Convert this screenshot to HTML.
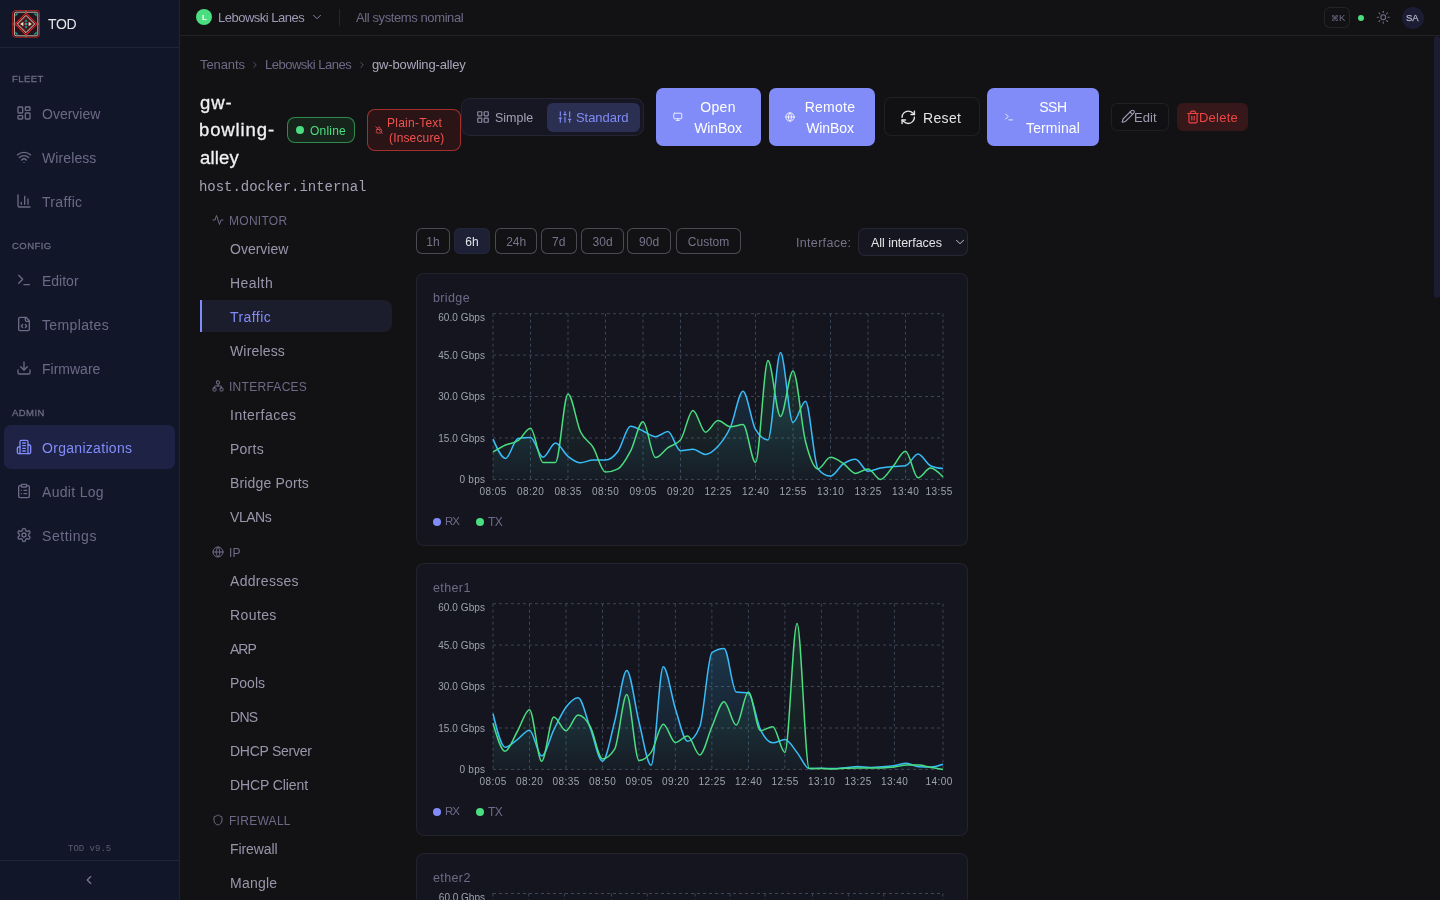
<!DOCTYPE html>
<html><head><meta charset="utf-8"><title>TOD</title>
<style>
*{margin:0;padding:0;box-sizing:border-box}
html,body{width:1440px;height:900px;overflow:hidden;background:#121214;font-family:"Liberation Sans", sans-serif;}
.b{position:absolute}
.ic{position:absolute;overflow:visible}
.t{position:absolute;white-space:nowrap;line-height:1;font-family:"Liberation Sans", sans-serif;will-change:transform}
.m{font-family:"Liberation Mono", monospace}
svg text{font-family:"Liberation Sans", sans-serif}
</style></head><body>
<div class="b" style="left:0px;top:0px;width:180px;height:900px;background:#111729;border-radius:0px;"></div>
<div class="b" style="left:179px;top:0px;width:1px;height:900px;background:#1e2433;border-radius:0px;"></div>
<div class="b" style="left:0px;top:47px;width:179px;height:1px;background:#1f2535;border-radius:0px;"></div>
<svg class="ic" style="left:12px;top:10px" width="28" height="28" viewBox="0 0 28 28">
<rect x="0.6" y="0.5" width="26.8" height="26.8" rx="3.2" fill="#24141d" stroke="#a11d1d" stroke-width="1.1"/>
<rect x="2.4" y="2.2" width="23.4" height="23.6" rx="1.6" fill="none" stroke="#cfc6b4" stroke-width="0.9"/>
<path d="M3.4 3.4h3.2L3.4 6.6zM24.6 3.4v3.2L21.4 3.4zM3.4 24.6v-3.2l3.2 3.2zM24.6 24.6h-3.2l3.2-3.2z" fill="#14a89a"/>
<path d="M14 0.6v2.6M14 24.8v2.6M0.6 14h2.6M24.8 14h2.6" stroke="#8a8276" stroke-width="0.9"/>
<path d="M14 3.2L24.8 14 14 24.8 3.2 14Z" fill="#2a121a" stroke="#d42525" stroke-width="1.2"/>
<path d="M14 5.4L22.6 14 14 22.6 5.4 14Z" fill="none" stroke="#e9dcc4" stroke-width="1"/>
<path d="M14 7.6L20.4 14 14 20.4 7.6 14Z" fill="none" stroke="#a31d1d" stroke-width="0.8"/>
<path d="M8.2 14l3.2-2.3v4.6zM19.8 14l-3.2-2.3v4.6z" fill="#f3e3c3"/>
<path d="M14 9.2l1.7 2.6h-3.4zM14 18.8l1.7-2.6h-3.4z" fill="#14a89a"/>
<path d="M12 14h4M14 12v4" stroke="#c42222" stroke-width="1.2"/>
<rect x="12.9" y="12.9" width="2.2" height="2.2" fill="#14a89a"/>
</svg>
<div class="t" style="left:48.00px;top:17.15px;font-size:14px;color:#e5e7eb;letter-spacing:-0.4px;">TOD</div>
<div class="t" style="left:12.00px;top:74.46px;font-size:9.5px;color:#6b6b80;letter-spacing:0.45px;-webkit-text-stroke:0.3px #6b6b80;">FLEET</div>
<svg class="ic" style="left:15.9px;top:105.2px" width="16" height="16" viewBox="0 0 24 24" fill="none" stroke="#6d6a87" stroke-width="2" stroke-linecap="round" stroke-linejoin="round" ><rect width="7" height="9" x="3" y="3" rx="1"/><rect width="7" height="5" x="14" y="3" rx="1"/><rect width="7" height="9" x="14" y="12" rx="1"/><rect width="7" height="5" x="3" y="16" rx="1"/></svg>
<div class="t" style="left:42.00px;top:107.15px;font-size:14px;color:#6d6a87;">Overview</div>
<svg class="ic" style="left:15.9px;top:149.2px" width="16" height="16" viewBox="0 0 24 24" fill="none" stroke="#6d6a87" stroke-width="2" stroke-linecap="round" stroke-linejoin="round" ><path d="M12 20h.01"/><path d="M2 8.82a15 15 0 0 1 20 0"/><path d="M5 12.859a10 10 0 0 1 14 0"/><path d="M8.5 16.429a5 5 0 0 1 7 0"/></svg>
<div class="t" style="left:42.00px;top:151.15px;font-size:14px;color:#6d6a87;letter-spacing:0.1px;">Wireless</div>
<svg class="ic" style="left:15.9px;top:193.39999999999998px" width="16" height="16" viewBox="0 0 24 24" fill="none" stroke="#6d6a87" stroke-width="2" stroke-linecap="round" stroke-linejoin="round" ><path d="M3 3v16a2 2 0 0 0 2 2h16"/><path d="M18 17V9"/><path d="M13 17V5"/><path d="M8 17v-3"/></svg>
<div class="t" style="left:42.00px;top:195.35px;font-size:14px;color:#6d6a87;letter-spacing:0.33px;">Traffic</div>
<div class="t" style="left:12.00px;top:241.46px;font-size:9.5px;color:#6b6b80;letter-spacing:0.45px;-webkit-text-stroke:0.3px #6b6b80;">CONFIG</div>
<svg class="ic" style="left:15.9px;top:271.7px" width="16" height="16" viewBox="0 0 24 24" fill="none" stroke="#6d6a87" stroke-width="2" stroke-linecap="round" stroke-linejoin="round" ><polyline points="4 17 10 11 4 5"/><line x1="12" x2="20" y1="19" y2="19"/></svg>
<div class="t" style="left:42.00px;top:273.65px;font-size:14px;color:#6d6a87;">Editor</div>
<svg class="ic" style="left:15.9px;top:316.2px" width="16" height="16" viewBox="0 0 24 24" fill="none" stroke="#6d6a87" stroke-width="2" stroke-linecap="round" stroke-linejoin="round" ><path d="M10 12.5 8 15l2 2.5"/><path d="m14 12.5 2 2.5-2 2.5"/><path d="M14 2v4a2 2 0 0 0 2 2h4"/><path d="M15 2H6a2 2 0 0 0-2 2v16a2 2 0 0 0 2 2h12a2 2 0 0 0 2-2V7z"/></svg>
<div class="t" style="left:42.00px;top:318.15px;font-size:14px;color:#6d6a87;letter-spacing:0.37px;">Templates</div>
<svg class="ic" style="left:15.9px;top:360.4px" width="16" height="16" viewBox="0 0 24 24" fill="none" stroke="#6d6a87" stroke-width="2" stroke-linecap="round" stroke-linejoin="round" ><path d="M21 15v4a2 2 0 0 1-2 2H5a2 2 0 0 1-2-2v-4"/><polyline points="7 10 12 15 17 10"/><line x1="12" x2="12" y1="15" y2="3"/></svg>
<div class="t" style="left:42.00px;top:362.35px;font-size:14px;color:#6d6a87;">Firmware</div>
<div class="t" style="left:12.00px;top:408.46px;font-size:9.5px;color:#6b6b80;letter-spacing:0.45px;-webkit-text-stroke:0.3px #6b6b80;">ADMIN</div>
<div class="b" style="left:4px;top:425.0px;width:171px;height:44px;background:#1e2346;border-radius:7px;"></div>
<svg class="ic" style="left:15.9px;top:438.7px" width="16" height="16" viewBox="0 0 24 24" fill="none" stroke="#818cf8" stroke-width="2" stroke-linecap="round" stroke-linejoin="round" ><path d="M6 22V4a2 2 0 0 1 2-2h8a2 2 0 0 1 2 2v18Z"/><path d="M6 12H4a2 2 0 0 0-2 2v6a2 2 0 0 0 2 2h2"/><path d="M18 9h2a2 2 0 0 1 2 2v9a2 2 0 0 1-2 2h-2"/><path d="M10 6h4"/><path d="M10 10h4"/><path d="M10 14h4"/><path d="M10 18h4"/></svg>
<div class="t" style="left:42.00px;top:440.65px;font-size:14px;color:#818cf8;letter-spacing:0.3px;">Organizations</div>
<svg class="ic" style="left:15.9px;top:482.9px" width="16" height="16" viewBox="0 0 24 24" fill="none" stroke="#6d6a87" stroke-width="2" stroke-linecap="round" stroke-linejoin="round" ><rect width="8" height="4" x="8" y="2" rx="1" ry="1"/><path d="M16 4h2a2 2 0 0 1 2 2v14a2 2 0 0 1-2 2H6a2 2 0 0 1-2-2V6a2 2 0 0 1 2-2h2"/><path d="M12 11h4"/><path d="M12 16h4"/><path d="M8 11h.01"/><path d="M8 16h.01"/></svg>
<div class="t" style="left:42.00px;top:484.85px;font-size:14px;color:#6d6a87;letter-spacing:0.31px;">Audit Log</div>
<svg class="ic" style="left:15.9px;top:527.2px" width="16" height="16" viewBox="0 0 24 24" fill="none" stroke="#6d6a87" stroke-width="2" stroke-linecap="round" stroke-linejoin="round" ><path d="M12.22 2h-.44a2 2 0 0 0-2 2v.18a2 2 0 0 1-1 1.73l-.43.25a2 2 0 0 1-2 0l-.15-.08a2 2 0 0 0-2.73.73l-.22.38a2 2 0 0 0 .73 2.73l.15.1a2 2 0 0 1 1 1.72v.51a2 2 0 0 1-1 1.74l-.15.09a2 2 0 0 0-.73 2.73l.22.38a2 2 0 0 0 2.73.73l.15-.08a2 2 0 0 1 2 0l.43.25a2 2 0 0 1 1 1.73V20a2 2 0 0 0 2 2h.44a2 2 0 0 0 2-2v-.18a2 2 0 0 1 1-1.73l.43-.25a2 2 0 0 1 2 0l.15.08a2 2 0 0 0 2.73-.73l.22-.39a2 2 0 0 0-.73-2.73l-.15-.08a2 2 0 0 1-1-1.74v-.5a2 2 0 0 1 1-1.74l.15-.09a2 2 0 0 0 .73-2.73l-.22-.38a2 2 0 0 0-2.73-.73l-.15.08a2 2 0 0 1-2 0l-.43-.25a2 2 0 0 1-1-1.73V4a2 2 0 0 0-2-2z"/><circle cx="12" cy="12" r="3"/></svg>
<div class="t" style="left:42.00px;top:529.15px;font-size:14px;color:#6d6a87;letter-spacing:0.55px;">Settings</div>
<div class="t m" style="left:68.00px;top:845.10px;font-size:9px;color:#5b5b70;">TOD v9.5</div>
<div class="b" style="left:0px;top:860px;width:179px;height:1px;background:#1f2535;border-radius:0px;"></div>
<svg class="ic" style="left:82px;top:873px" width="14" height="14" viewBox="0 0 24 24" fill="none" stroke="#7c7a99" stroke-width="2" stroke-linecap="round" stroke-linejoin="round" ><path d="m15 18-6-6 6-6"/></svg>
<div class="b" style="left:180px;top:35px;width:1260px;height:1px;background:#232326;border-radius:0px;"></div>
<div class="b" style="left:196px;top:9px;width:16px;height:16px;border-radius:8px;background:#4ade80"></div>
<div class="t" style="left:201.50px;top:14.23px;font-size:8px;color:#ffffff;font-weight:700;">L</div>
<div class="t" style="left:218.30px;top:11.00px;font-size:13px;color:#9d9ab4;letter-spacing:-0.5px;">Lebowski Lanes</div>
<svg class="ic" style="left:309.5px;top:10px" width="14" height="14" viewBox="0 0 24 24" fill="none" stroke="#8a88a3" stroke-width="1.7" stroke-linecap="round" stroke-linejoin="round" ><path d="m6 9 6 6 6-6"/></svg>
<div class="b" style="left:338.5px;top:9px;width:1px;height:17px;background:#26262b;border-radius:0px;"></div>
<div class="t" style="left:356.00px;top:11.00px;font-size:13px;color:#6d6a87;letter-spacing:-0.4px;">All systems nominal</div>
<div class="b" style="left:1324px;top:7px;width:26px;height:21px;background:transparent;border-radius:6px;box-shadow:inset 0 0 0 1px #242428;"></div>
<div class="t" style="left:1330.50px;top:13.46px;font-size:9.5px;color:#6f6c88;"><span style='font-size:8px'>&#8984;</span>K</div>
<div class="b" style="left:1358px;top:14.5px;width:6px;height:6px;border-radius:3px;background:#4ade80"></div>
<svg class="ic" style="left:1375.8px;top:10.2px" width="14.5" height="14.5" viewBox="0 0 24 24" fill="none" stroke="#77748f" stroke-width="1.7" stroke-linecap="round" stroke-linejoin="round" ><circle cx="12" cy="12" r="4"/><path d="M12 2v2"/><path d="M12 20v2"/><path d="m4.93 4.93 1.41 1.41"/><path d="m17.66 17.66 1.41 1.41"/><path d="M2 12h2"/><path d="M20 12h2"/><path d="m6.34 17.66-1.41 1.41"/><path d="m19.07 4.93-1.41 1.41"/></svg>
<div class="b" style="left:1402px;top:6.5px;width:22px;height:22px;border-radius:11px;background:#1c1c35"></div>
<div class="t" style="left:1406.30px;top:13.26px;font-size:9.5px;color:#b7b5cc;-webkit-text-stroke:0.25px #b7b5cc;">SA</div>
<div class="b" style="left:1434px;top:36px;width:6px;height:262px;border-radius:3px;background:#1c1c33"></div>
<div class="t" style="left:199.90px;top:58.10px;font-size:13px;color:#6d6a87;letter-spacing:-0.1px;">Tenants</div>
<svg class="ic" style="left:250px;top:59.5px" width="10" height="10" viewBox="0 0 24 24" fill="none" stroke="#5f5c78" stroke-width="2" stroke-linecap="round" stroke-linejoin="round" ><path d="m9 18 6-6-6-6"/></svg>
<div class="t" style="left:265.40px;top:58.10px;font-size:13px;color:#6d6a87;letter-spacing:-0.5px;">Lebowski Lanes</div>
<svg class="ic" style="left:357px;top:59.5px" width="10" height="10" viewBox="0 0 24 24" fill="none" stroke="#5f5c78" stroke-width="2" stroke-linecap="round" stroke-linejoin="round" ><path d="m9 18 6-6-6-6"/></svg>
<div class="t" style="left:372.00px;top:58.10px;font-size:13px;color:#a9a7bb;letter-spacing:-0.15px;">gw-bowling-alley</div>
<div class="t" style="left:200.10px;top:93.64px;font-size:18.5px;color:#f1f1f4;letter-spacing:0.9px;-webkit-text-stroke:0.3px #f1f1f4;">gw-</div>
<div class="t" style="left:199.20px;top:121.44px;font-size:18.5px;color:#f1f1f4;letter-spacing:0.88px;-webkit-text-stroke:0.3px #f1f1f4;">bowling-</div>
<div class="t" style="left:200.10px;top:149.14px;font-size:18.5px;color:#f1f1f4;letter-spacing:0.18px;-webkit-text-stroke:0.3px #f1f1f4;">alley</div>
<div class="t m" style="left:199.10px;top:180.27px;font-size:14px;color:#a3a1b5;letter-spacing:-0.03px;">host.docker.internal</div>
<div class="b" style="left:287px;top:117px;width:67.5px;height:26px;background:#16241b;border-radius:8px;box-shadow:inset 0 0 0 1px #2f8a4c;"></div>
<div class="b" style="left:296px;top:126.3px;width:8px;height:8px;border-radius:4px;background:#4ade80"></div>
<div class="t" style="left:310.00px;top:124.74px;font-size:12px;color:#4ade80;letter-spacing:0.2px;">Online</div>
<div class="b" style="left:366.5px;top:109px;width:94px;height:41.5px;background:#2a1416;border-radius:8px;box-shadow:inset 0 0 0 1px #a3302f;"></div>
<svg class="ic" style="left:374.6px;top:126.3px" width="8" height="8" viewBox="0 0 24 24" fill="none" stroke="#e05252" stroke-width="2.2" stroke-linecap="round" stroke-linejoin="round" ><rect x="4" y="10" width="16" height="11" rx="2"/><path d="M8 10V7a4 4 0 0 1 8 0v3"/><path d="m2 2 20 20"/></svg>
<div class="t" style="left:387.20px;top:117.04px;font-size:12px;color:#ef5350;letter-spacing:0.25px;">Plain-Text</div>
<div class="t" style="left:389.40px;top:132.14px;font-size:12px;color:#ef5350;letter-spacing:0.15px;">(Insecure)</div>
<div class="b" style="left:461.3px;top:98px;width:183px;height:38px;background:#171724;border-radius:9px;box-shadow:inset 0 0 0 1px #242433;"></div>
<div class="b" style="left:547.3px;top:103px;width:93px;height:28.5px;background:#2b2f52;border-radius:6px;"></div>
<svg class="ic" style="left:475.5px;top:109.8px" width="14" height="14" viewBox="0 0 24 24" fill="none" stroke="#8d8ba3" stroke-width="2" stroke-linecap="round" stroke-linejoin="round" ><rect width="7" height="7" x="3" y="3" rx="1"/><rect width="7" height="7" x="14" y="3" rx="1"/><rect width="7" height="7" x="14" y="14" rx="1"/><rect width="7" height="7" x="3" y="14" rx="1"/></svg>
<div class="t" style="left:495.30px;top:111.82px;font-size:12.5px;color:#a3a1b5;">Simple</div>
<svg class="ic" style="left:557.5px;top:109.8px" width="14" height="14" viewBox="0 0 24 24" fill="none" stroke="#818cf8" stroke-width="2" stroke-linecap="round" stroke-linejoin="round" ><line x1="4" x2="4" y1="21" y2="14"/><line x1="4" x2="4" y1="10" y2="3"/><line x1="12" x2="12" y1="21" y2="12"/><line x1="12" x2="12" y1="8" y2="3"/><line x1="20" x2="20" y1="21" y2="16"/><line x1="20" x2="20" y1="12" y2="3"/><line x1="2" x2="6" y1="14" y2="14"/><line x1="10" x2="14" y1="8" y2="8"/><line x1="18" x2="22" y1="16" y2="16"/></svg>
<div class="t" style="left:576.00px;top:110.80px;font-size:13px;color:#818cf8;letter-spacing:-0.05px;">Standard</div>
<div class="b" style="left:656.3px;top:88px;width:104.7px;height:58px;background:#818cf8;border-radius:7px;"></div>
<svg class="ic" style="left:672.7px;top:111.9px" width="9.6" height="9.6" viewBox="0 0 24 24" fill="none" stroke="#f4f4ff" stroke-width="2.3" stroke-linecap="round" stroke-linejoin="round" ><rect width="20" height="14" x="2" y="3" rx="2"/><line x1="8" x2="16" y1="21" y2="21"/><line x1="12" x2="12" y1="17" y2="21"/></svg>
<div class="t" style="left:0.00px;top:99.95px;font-size:14px;color:#ffffff;letter-spacing:0.33px;left:667.7px;width:100px;text-align:center;">Open</div>
<div class="t" style="left:0.00px;top:120.65px;font-size:14px;color:#ffffff;letter-spacing:-0.1px;left:667.7px;width:100px;text-align:center;">WinBox</div>
<div class="b" style="left:768.8px;top:88px;width:106.5px;height:58px;background:#818cf8;border-radius:7px;"></div>
<svg class="ic" style="left:784.5px;top:111.7px" width="10" height="10" viewBox="0 0 24 24" fill="none" stroke="#f4f4ff" stroke-width="2.3" stroke-linecap="round" stroke-linejoin="round" ><circle cx="12" cy="12" r="10"/><path d="M12 2a14.5 14.5 0 0 0 0 20 14.5 14.5 0 0 0 0-20"/><path d="M2 12h20"/></svg>
<div class="t" style="left:0.00px;top:99.95px;font-size:14px;color:#ffffff;letter-spacing:0.27px;left:780.3px;width:100px;text-align:center;">Remote</div>
<div class="t" style="left:0.00px;top:120.65px;font-size:14px;color:#ffffff;letter-spacing:-0.1px;left:780.3px;width:100px;text-align:center;">WinBox</div>
<div class="b" style="left:883.9px;top:97.3px;width:95.8px;height:39px;background:#111113;border-radius:7px;box-shadow:inset 0 0 0 1px #202024;"></div>
<svg class="ic" style="left:900.2px;top:108.6px" width="16.5" height="16.5" viewBox="0 0 24 24" fill="none" stroke="#e4e4e7" stroke-width="2" stroke-linecap="round" stroke-linejoin="round" ><path d="M3 12a9 9 0 0 1 9-9 9.75 9.75 0 0 1 6.74 2.74L21 8"/><path d="M21 3v5h-5"/><path d="M21 12a9 9 0 0 1-9 9 9.75 9.75 0 0 1-6.74-2.74L3 16"/><path d="M8 16H3v5"/></svg>
<div class="t" style="left:923.40px;top:111.15px;font-size:14px;color:#e4e4e7;letter-spacing:0.33px;">Reset</div>
<div class="b" style="left:987.4px;top:88px;width:111.2px;height:58px;background:#818cf8;border-radius:7px;"></div>
<svg class="ic" style="left:1003.8px;top:111.7px" width="10" height="10" viewBox="0 0 24 24" fill="none" stroke="#f4f4ff" stroke-width="2.3" stroke-linecap="round" stroke-linejoin="round" ><polyline points="4 17 10 11 4 5"/><line x1="12" x2="20" y1="19" y2="19"/></svg>
<div class="t" style="left:0.00px;top:99.95px;font-size:14px;color:#ffffff;letter-spacing:-0.35px;left:1003.0999999999999px;width:100px;text-align:center;">SSH</div>
<div class="t" style="left:0.00px;top:120.65px;font-size:14px;color:#ffffff;letter-spacing:0.12px;left:1003.0999999999999px;width:100px;text-align:center;">Terminal</div>
<div class="b" style="left:1110.7px;top:103px;width:58px;height:28px;background:#111113;border-radius:6px;box-shadow:inset 0 0 0 1px #202024;"></div>
<svg class="ic" style="left:1121px;top:109.2px" width="14.5" height="14.5" viewBox="0 0 24 24" fill="none" stroke="#9e9cb3" stroke-width="1.9" stroke-linecap="round" stroke-linejoin="round" ><path d="M21.174 6.812a1 1 0 0 0-3.986-3.987L3.842 16.174a2 2 0 0 0-.5.83l-1.321 4.352a.5.5 0 0 0 .623.622l4.353-1.32a2 2 0 0 0 .83-.497z"/><path d="m15 5 4 4"/></svg>
<div class="t" style="left:1134.20px;top:110.90px;font-size:13px;color:#9e9cb3;letter-spacing:0.03px;">Edit</div>
<div class="b" style="left:1176.8px;top:103px;width:71.1px;height:28px;background:#36171a;border-radius:6px;"></div>
<svg class="ic" style="left:1186.4px;top:110.3px" width="14" height="14" viewBox="0 0 24 24" fill="none" stroke="#ef4444" stroke-width="2" stroke-linecap="round" stroke-linejoin="round" ><path d="M3 6h18"/><path d="M19 6v14c0 1-1 2-2 2H7c-1 0-2-1-2-2V6"/><path d="M8 6V4c0-1 1-2 2-2h4c1 0 2 1 2 2v2"/><line x1="10" x2="10" y1="11" y2="17"/><line x1="14" x2="14" y1="11" y2="17"/></svg>
<div class="t" style="left:1199.40px;top:110.90px;font-size:13px;color:#ef4444;letter-spacing:0.23px;">Delete</div>
<svg class="ic" style="left:212px;top:214.4px" width="12" height="12" viewBox="0 0 24 24" fill="none" stroke="#6d6a87" stroke-width="2" stroke-linecap="round" stroke-linejoin="round" ><path d="M22 12h-4l-3 9L9 3l-3 9H2"/></svg>
<div class="t" style="left:229.40px;top:215.24px;font-size:12px;color:#6d6a87;letter-spacing:0.28px;">MONITOR</div>
<div class="t" style="left:230.20px;top:242.15px;font-size:14px;color:#9896ab;">Overview</div>
<div class="t" style="left:230.20px;top:276.15px;font-size:14px;color:#9896ab;letter-spacing:0.45px;">Health</div>
<div class="b" style="left:200px;top:300.2px;width:192px;height:32px;background:#1c1d2c;border-radius:0px;border-radius:0 8px 8px 0;"></div>
<div class="b" style="left:200px;top:300.2px;width:2px;height:32px;background:#818cf8;border-radius:0px;"></div>
<div class="t" style="left:230.20px;top:310.15px;font-size:14px;color:#818cf8;letter-spacing:0.43px;">Traffic</div>
<div class="t" style="left:230.20px;top:344.15px;font-size:14px;color:#9896ab;letter-spacing:0.16px;">Wireless</div>
<svg class="ic" style="left:212px;top:380px" width="12" height="12" viewBox="0 0 24 24" fill="none" stroke="#6d6a87" stroke-width="2" stroke-linecap="round" stroke-linejoin="round" ><rect x="16" y="16" width="6" height="6" rx="1"/><rect x="2" y="16" width="6" height="6" rx="1"/><rect x="9" y="2" width="6" height="6" rx="1"/><path d="M5 16v-3a1 1 0 0 1 1-1h12a1 1 0 0 1 1 1v3"/><path d="M12 12V8"/></svg>
<div class="t" style="left:229.40px;top:380.84px;font-size:12px;color:#6d6a87;letter-spacing:0.28px;">INTERFACES</div>
<div class="t" style="left:230.20px;top:408.15px;font-size:14px;color:#9896ab;letter-spacing:0.5px;">Interfaces</div>
<div class="t" style="left:230.20px;top:442.15px;font-size:14px;color:#9896ab;letter-spacing:0.25px;">Ports</div>
<div class="t" style="left:230.20px;top:476.15px;font-size:14px;color:#9896ab;letter-spacing:0.16px;">Bridge Ports</div>
<div class="t" style="left:230.20px;top:510.15px;font-size:14px;color:#9896ab;letter-spacing:-0.45px;">VLANs</div>
<svg class="ic" style="left:212px;top:546px" width="12" height="12" viewBox="0 0 24 24" fill="none" stroke="#6d6a87" stroke-width="2" stroke-linecap="round" stroke-linejoin="round" ><circle cx="12" cy="12" r="10"/><path d="M12 2a14.5 14.5 0 0 0 0 20 14.5 14.5 0 0 0 0-20"/><path d="M2 12h20"/></svg>
<div class="t" style="left:229.40px;top:546.84px;font-size:12px;color:#6d6a87;letter-spacing:0.28px;">IP</div>
<div class="t" style="left:230.20px;top:574.15px;font-size:14px;color:#9896ab;letter-spacing:0.31px;">Addresses</div>
<div class="t" style="left:230.20px;top:608.15px;font-size:14px;color:#9896ab;letter-spacing:0.4px;">Routes</div>
<div class="t" style="left:230.20px;top:642.15px;font-size:14px;color:#9896ab;letter-spacing:-1.0px;">ARP</div>
<div class="t" style="left:230.20px;top:676.15px;font-size:14px;color:#9896ab;">Pools</div>
<div class="t" style="left:230.20px;top:710.15px;font-size:14px;color:#9896ab;letter-spacing:-0.7px;">DNS</div>
<div class="t" style="left:230.20px;top:744.15px;font-size:14px;color:#9896ab;letter-spacing:-0.27px;">DHCP Server</div>
<div class="t" style="left:230.20px;top:778.15px;font-size:14px;color:#9896ab;letter-spacing:-0.1px;">DHCP Client</div>
<svg class="ic" style="left:212px;top:814px" width="12" height="12" viewBox="0 0 24 24" fill="none" stroke="#6d6a87" stroke-width="2" stroke-linecap="round" stroke-linejoin="round" ><path d="M20 13c0 5-3.5 7.5-7.66 8.95a1 1 0 0 1-.67-.01C7.5 20.5 4 18 4 13V6a1 1 0 0 1 1-1c2 0 4.5-1.2 6.24-2.72a1.17 1.17 0 0 1 1.52 0C14.51 3.81 17 5 19 5a1 1 0 0 1 1 1z"/></svg>
<div class="t" style="left:229.40px;top:814.84px;font-size:12px;color:#6d6a87;letter-spacing:0.28px;">FIREWALL</div>
<div class="t" style="left:230.20px;top:842.15px;font-size:14px;color:#9896ab;letter-spacing:-0.1px;">Firewall</div>
<div class="t" style="left:230.20px;top:876.15px;font-size:14px;color:#9896ab;letter-spacing:0.24px;">Mangle</div>
<div class="b" style="left:415.9px;top:228.4px;width:33.8px;height:25.5px;background:transparent;border-radius:6px;box-shadow:inset 0 0 0 1px #4a4a52;"></div>
<div class="t" style="left:0.00px;top:236.44px;font-size:12px;color:#76738c;left:415.9px;width:33.8px;text-align:center;">1h</div>
<div class="b" style="left:454.2px;top:228.4px;width:36.1px;height:25.5px;background:#1e2035;border-radius:6px;box-shadow:inset 0 0 0 1px #23253a;"></div>
<div class="t" style="left:0.00px;top:236.44px;font-size:12px;color:#e4e4e7;left:454.2px;width:36.1px;text-align:center;">6h</div>
<div class="b" style="left:494.5px;top:228.4px;width:42.3px;height:25.5px;background:transparent;border-radius:6px;box-shadow:inset 0 0 0 1px #4a4a52;"></div>
<div class="t" style="left:0.00px;top:236.44px;font-size:12px;color:#76738c;left:494.5px;width:42.3px;text-align:center;">24h</div>
<div class="b" style="left:541px;top:228.4px;width:35.5px;height:25.5px;background:transparent;border-radius:6px;box-shadow:inset 0 0 0 1px #4a4a52;"></div>
<div class="t" style="left:0.00px;top:236.44px;font-size:12px;color:#76738c;left:541px;width:35.5px;text-align:center;">7d</div>
<div class="b" style="left:580.5px;top:228.4px;width:43.2px;height:25.5px;background:transparent;border-radius:6px;box-shadow:inset 0 0 0 1px #4a4a52;"></div>
<div class="t" style="left:0.00px;top:236.44px;font-size:12px;color:#76738c;left:580.5px;width:43.2px;text-align:center;">30d</div>
<div class="b" style="left:627.2px;top:228.4px;width:44.2px;height:25.5px;background:transparent;border-radius:6px;box-shadow:inset 0 0 0 1px #4a4a52;"></div>
<div class="t" style="left:0.00px;top:236.44px;font-size:12px;color:#76738c;left:627.2px;width:44.2px;text-align:center;">90d</div>
<div class="b" style="left:675.6px;top:228.4px;width:65px;height:25.5px;background:transparent;border-radius:6px;box-shadow:inset 0 0 0 1px #4a4a52;"></div>
<div class="t" style="left:0.00px;top:236.44px;font-size:12px;color:#76738c;left:675.6px;width:65px;text-align:center;">Custom</div>
<div class="t" style="left:796.00px;top:237.42px;font-size:12.5px;color:#76738c;letter-spacing:0.32px;">Interface:</div>
<div class="b" style="left:858.2px;top:228px;width:110px;height:28px;background:#161620;border-radius:7px;box-shadow:inset 0 0 0 1px #262636;"></div>
<div class="t" style="left:871.00px;top:237.42px;font-size:12.5px;color:#e4e4e7;letter-spacing:-0.05px;">All interfaces</div>
<svg class="ic" style="left:952.5px;top:235px" width="14" height="14" viewBox="0 0 24 24" fill="none" stroke="#d4d4d8" stroke-width="1.6" stroke-linecap="round" stroke-linejoin="round" ><path d="m6 9 6 6 6-6"/></svg>
<div class="b" style="left:416px;top:273px;width:552px;height:273px;background:#15151f;border-radius:8px;box-shadow:inset 0 0 0 1px #23232e;"></div>
<div class="t" style="left:432.60px;top:291.62px;font-size:12.5px;color:#6d6a87;letter-spacing:0.38px;">bridge</div>
<div class="b" style="left:416px;top:563px;width:552px;height:273px;background:#15151f;border-radius:8px;box-shadow:inset 0 0 0 1px #23232e;"></div>
<div class="t" style="left:432.60px;top:581.62px;font-size:12.5px;color:#6d6a87;letter-spacing:0.38px;">ether1</div>
<div class="b" style="left:416px;top:853px;width:552px;height:273px;background:#15151f;border-radius:8px;box-shadow:inset 0 0 0 1px #23232e;"></div>
<div class="t" style="left:432.60px;top:871.62px;font-size:12.5px;color:#6d6a87;letter-spacing:0.38px;">ether2</div>
<div class="b" style="left:433px;top:517.8px;width:8px;height:8px;border-radius:4px;background:#818cf8"></div>
<div class="t" style="left:444.60px;top:515.97px;font-size:11.5px;color:#6d6a87;letter-spacing:-1.0px;">RX</div>
<div class="b" style="left:476px;top:517.8px;width:8px;height:8px;border-radius:4px;background:#4ade80"></div>
<div class="t" style="left:488.00px;top:515.54px;font-size:12px;color:#6d6a87;letter-spacing:-0.6px;">TX</div>
<div class="b" style="left:433px;top:807.8px;width:8px;height:8px;border-radius:4px;background:#818cf8"></div>
<div class="t" style="left:444.60px;top:805.97px;font-size:11.5px;color:#6d6a87;letter-spacing:-1.0px;">RX</div>
<div class="b" style="left:476px;top:807.8px;width:8px;height:8px;border-radius:4px;background:#4ade80"></div>
<div class="t" style="left:488.00px;top:805.54px;font-size:12px;color:#6d6a87;letter-spacing:-0.6px;">TX</div>
<svg class="ic" style="left:0;top:0" width="1440" height="900" viewBox="0 0 1440 900"><defs><linearGradient id="rxg1" x1="0" y1="0" x2="0" y2="1"><stop offset="0" stop-color="#38bdf8" stop-opacity="0.2"/><stop offset="1" stop-color="#38bdf8" stop-opacity="0.02"/></linearGradient><linearGradient id="txg1" x1="0" y1="0" x2="0" y2="1"><stop offset="0" stop-color="#4ade80" stop-opacity="0.15"/><stop offset="1" stop-color="#4ade80" stop-opacity="0.02"/></linearGradient><linearGradient id="rxg2" x1="0" y1="0" x2="0" y2="1"><stop offset="0" stop-color="#38bdf8" stop-opacity="0.2"/><stop offset="1" stop-color="#38bdf8" stop-opacity="0.02"/></linearGradient><linearGradient id="txg2" x1="0" y1="0" x2="0" y2="1"><stop offset="0" stop-color="#4ade80" stop-opacity="0.15"/><stop offset="1" stop-color="#4ade80" stop-opacity="0.02"/></linearGradient></defs><g stroke="#3a4659" stroke-opacity="1" stroke-dasharray="3 3" stroke-width="1"><line x1="493.0" x2="943.0" y1="313.7" y2="313.7"/><line x1="493.0" x2="943.0" y1="355.1" y2="355.1"/><line x1="493.0" x2="943.0" y1="396.5" y2="396.5"/><line x1="493.0" x2="943.0" y1="438.0" y2="438.0"/><line x1="493.0" x2="943.0" y1="479.4" y2="479.4"/><line x1="493.0" x2="493.0" y1="313.7" y2="479.4"/><line x1="530.5" x2="530.5" y1="313.7" y2="479.4"/><line x1="568.0" x2="568.0" y1="313.7" y2="479.4"/><line x1="605.5" x2="605.5" y1="313.7" y2="479.4"/><line x1="643.0" x2="643.0" y1="313.7" y2="479.4"/><line x1="680.5" x2="680.5" y1="313.7" y2="479.4"/><line x1="718.0" x2="718.0" y1="313.7" y2="479.4"/><line x1="755.5" x2="755.5" y1="313.7" y2="479.4"/><line x1="793.0" x2="793.0" y1="313.7" y2="479.4"/><line x1="830.5" x2="830.5" y1="313.7" y2="479.4"/><line x1="868.0" x2="868.0" y1="313.7" y2="479.4"/><line x1="905.5" x2="905.5" y1="313.7" y2="479.4"/><line x1="943.0" x2="943.0" y1="313.7" y2="479.4"/></g><g fill="#9ca3af" font-size="10" class="ax"><text x="485.08" y="321.1" text-anchor="end" letter-spacing="0.08">60.0 Gbps</text><text x="485.08" y="358.7" text-anchor="end" letter-spacing="0.08">45.0 Gbps</text><text x="485.08" y="400.1" text-anchor="end" letter-spacing="0.08">30.0 Gbps</text><text x="485.08" y="441.6" text-anchor="end" letter-spacing="0.08">15.0 Gbps</text><text x="485.25" y="483.0" text-anchor="end" letter-spacing="0.25">0 bps</text><text x="493.2" y="494.6" text-anchor="middle" letter-spacing="0.45">08:05</text><text x="530.7" y="494.6" text-anchor="middle" letter-spacing="0.45">08:20</text><text x="568.2" y="494.6" text-anchor="middle" letter-spacing="0.45">08:35</text><text x="605.7" y="494.6" text-anchor="middle" letter-spacing="0.45">08:50</text><text x="643.2" y="494.6" text-anchor="middle" letter-spacing="0.45">09:05</text><text x="680.7" y="494.6" text-anchor="middle" letter-spacing="0.45">09:20</text><text x="718.2" y="494.6" text-anchor="middle" letter-spacing="0.45">12:25</text><text x="755.7" y="494.6" text-anchor="middle" letter-spacing="0.45">12:40</text><text x="793.2" y="494.6" text-anchor="middle" letter-spacing="0.45">12:55</text><text x="830.7" y="494.6" text-anchor="middle" letter-spacing="0.45">13:10</text><text x="868.2" y="494.6" text-anchor="middle" letter-spacing="0.45">13:25</text><text x="905.7" y="494.6" text-anchor="middle" letter-spacing="0.45">13:40</text><text x="939.2" y="494.6" text-anchor="middle" letter-spacing="0.45">13:55</text></g><path d="M493.00,439.10C497.17,448.75,501.33,458.40,505.50,458.40C509.67,458.40,513.83,439.17,518.00,438.50C522.17,437.83,526.33,437.50,530.50,437.50C534.67,437.50,538.83,457.30,543.00,457.30C547.17,457.30,551.33,443.10,555.50,443.10C559.67,443.10,563.83,453.02,568.00,456.30C572.17,459.58,576.33,462.80,580.50,462.80C584.67,462.80,588.83,460.00,593.00,460.00C597.17,460.00,601.33,460.00,605.50,460.00C609.67,460.00,613.83,456.83,618.00,451.20C622.17,445.57,626.33,426.20,630.50,426.20C634.67,426.20,638.83,429.25,643.00,431.00C647.17,432.75,651.33,436.70,655.50,436.70C659.67,436.70,663.83,431.50,668.00,431.50C672.17,431.50,676.33,450.80,680.50,450.80C684.67,450.80,688.83,449.20,693.00,449.20C697.17,449.20,701.33,454.40,705.50,454.40C709.67,454.40,713.83,450.87,718.00,446.30C722.17,441.73,726.33,436.18,730.50,427.00C734.67,417.82,738.83,391.20,743.00,391.20C747.17,391.20,751.33,422.40,755.50,429.40C759.67,436.40,763.83,439.90,768.00,439.90C772.17,439.90,776.33,352.60,780.50,352.60C784.67,352.60,788.83,422.50,793.00,422.50C797.17,422.50,801.33,401.20,805.50,401.20C809.67,401.20,813.83,464.10,818.00,468.90C822.17,473.70,826.33,476.10,830.50,476.10C834.67,476.10,838.83,466.92,843.00,464.10C847.17,461.28,851.33,459.20,855.50,459.20C859.67,459.20,863.83,471.30,868.00,471.30C872.17,471.30,876.33,468.90,880.50,468.10C884.67,467.30,888.83,466.90,893.00,466.50C897.17,466.10,901.33,466.23,905.50,465.70C909.67,465.17,913.83,454.10,918.00,454.10C922.17,454.10,926.33,463.77,930.50,465.70C934.67,467.63,938.83,468.12,943.00,468.60L943.00,479.40L493.00,479.40Z" fill="url(#rxg1)" stroke="none"/><path d="M493.00,452.00C497.17,449.44,501.33,446.88,505.50,445.00C509.67,443.12,513.83,443.48,518.00,440.70C522.17,437.92,526.33,428.30,530.50,428.30C534.67,428.30,538.83,462.40,543.00,462.40C547.17,462.40,551.33,462.40,555.50,462.40C559.67,462.40,563.83,394.00,568.00,394.00C572.17,394.00,576.33,422.95,580.50,431.80C584.67,440.65,588.83,440.38,593.00,447.10C597.17,453.82,601.33,472.10,605.50,472.10C609.67,472.10,613.83,471.03,618.00,468.90C622.17,466.77,626.33,459.05,630.50,451.20C634.67,443.35,638.83,421.80,643.00,421.80C647.17,421.80,651.33,457.60,655.50,457.60C659.67,457.60,663.83,450.55,668.00,447.60C672.17,444.65,676.33,445.03,680.50,439.90C684.67,434.77,688.83,410.40,693.00,410.40C697.17,410.40,701.33,432.20,705.50,432.20C709.67,432.20,713.83,420.60,718.00,420.60C722.17,420.60,726.33,426.70,730.50,426.70C734.67,426.70,738.83,424.60,743.00,424.60C747.17,424.60,751.33,462.40,755.50,462.40C759.67,462.40,763.83,360.60,768.00,360.60C772.17,360.60,776.33,416.50,780.50,416.50C784.67,416.50,788.83,370.90,793.00,370.90C797.17,370.90,801.33,425.17,805.50,441.50C809.67,457.83,813.83,468.90,818.00,468.90C822.17,468.90,826.33,457.30,830.50,457.30C834.67,457.30,838.83,460.52,843.00,463.20C847.17,465.88,851.33,473.40,855.50,473.40C859.67,473.40,863.83,468.90,868.00,468.90C872.17,468.90,876.33,479.40,880.50,479.40C884.67,479.40,888.83,471.20,893.00,466.50C897.17,461.80,901.33,451.20,905.50,451.20C909.67,451.20,913.83,477.70,918.00,477.70C922.17,477.70,926.33,468.10,930.50,468.10C934.67,468.10,938.83,472.55,943.00,477.00L943.00,479.40L493.00,479.40Z" fill="url(#txg1)" stroke="none"/><path d="M493.00,439.10C497.17,448.75,501.33,458.40,505.50,458.40C509.67,458.40,513.83,439.17,518.00,438.50C522.17,437.83,526.33,437.50,530.50,437.50C534.67,437.50,538.83,457.30,543.00,457.30C547.17,457.30,551.33,443.10,555.50,443.10C559.67,443.10,563.83,453.02,568.00,456.30C572.17,459.58,576.33,462.80,580.50,462.80C584.67,462.80,588.83,460.00,593.00,460.00C597.17,460.00,601.33,460.00,605.50,460.00C609.67,460.00,613.83,456.83,618.00,451.20C622.17,445.57,626.33,426.20,630.50,426.20C634.67,426.20,638.83,429.25,643.00,431.00C647.17,432.75,651.33,436.70,655.50,436.70C659.67,436.70,663.83,431.50,668.00,431.50C672.17,431.50,676.33,450.80,680.50,450.80C684.67,450.80,688.83,449.20,693.00,449.20C697.17,449.20,701.33,454.40,705.50,454.40C709.67,454.40,713.83,450.87,718.00,446.30C722.17,441.73,726.33,436.18,730.50,427.00C734.67,417.82,738.83,391.20,743.00,391.20C747.17,391.20,751.33,422.40,755.50,429.40C759.67,436.40,763.83,439.90,768.00,439.90C772.17,439.90,776.33,352.60,780.50,352.60C784.67,352.60,788.83,422.50,793.00,422.50C797.17,422.50,801.33,401.20,805.50,401.20C809.67,401.20,813.83,464.10,818.00,468.90C822.17,473.70,826.33,476.10,830.50,476.10C834.67,476.10,838.83,466.92,843.00,464.10C847.17,461.28,851.33,459.20,855.50,459.20C859.67,459.20,863.83,471.30,868.00,471.30C872.17,471.30,876.33,468.90,880.50,468.10C884.67,467.30,888.83,466.90,893.00,466.50C897.17,466.10,901.33,466.23,905.50,465.70C909.67,465.17,913.83,454.10,918.00,454.10C922.17,454.10,926.33,463.77,930.50,465.70C934.67,467.63,938.83,468.12,943.00,468.60" fill="none" stroke="#38bdf8" stroke-width="1.5"/><path d="M493.00,452.00C497.17,449.44,501.33,446.88,505.50,445.00C509.67,443.12,513.83,443.48,518.00,440.70C522.17,437.92,526.33,428.30,530.50,428.30C534.67,428.30,538.83,462.40,543.00,462.40C547.17,462.40,551.33,462.40,555.50,462.40C559.67,462.40,563.83,394.00,568.00,394.00C572.17,394.00,576.33,422.95,580.50,431.80C584.67,440.65,588.83,440.38,593.00,447.10C597.17,453.82,601.33,472.10,605.50,472.10C609.67,472.10,613.83,471.03,618.00,468.90C622.17,466.77,626.33,459.05,630.50,451.20C634.67,443.35,638.83,421.80,643.00,421.80C647.17,421.80,651.33,457.60,655.50,457.60C659.67,457.60,663.83,450.55,668.00,447.60C672.17,444.65,676.33,445.03,680.50,439.90C684.67,434.77,688.83,410.40,693.00,410.40C697.17,410.40,701.33,432.20,705.50,432.20C709.67,432.20,713.83,420.60,718.00,420.60C722.17,420.60,726.33,426.70,730.50,426.70C734.67,426.70,738.83,424.60,743.00,424.60C747.17,424.60,751.33,462.40,755.50,462.40C759.67,462.40,763.83,360.60,768.00,360.60C772.17,360.60,776.33,416.50,780.50,416.50C784.67,416.50,788.83,370.90,793.00,370.90C797.17,370.90,801.33,425.17,805.50,441.50C809.67,457.83,813.83,468.90,818.00,468.90C822.17,468.90,826.33,457.30,830.50,457.30C834.67,457.30,838.83,460.52,843.00,463.20C847.17,465.88,851.33,473.40,855.50,473.40C859.67,473.40,863.83,468.90,868.00,468.90C872.17,468.90,876.33,479.40,880.50,479.40C884.67,479.40,888.83,471.20,893.00,466.50C897.17,461.80,901.33,451.20,905.50,451.20C909.67,451.20,913.83,477.70,918.00,477.70C922.17,477.70,926.33,468.10,930.50,468.10C934.67,468.10,938.83,472.55,943.00,477.00" fill="none" stroke="#4ade80" stroke-width="1.5"/><g stroke="#3a4659" stroke-opacity="1" stroke-dasharray="3 3" stroke-width="1"><line x1="493.0" x2="943.0" y1="603.7" y2="603.7"/><line x1="493.0" x2="943.0" y1="645.1" y2="645.1"/><line x1="493.0" x2="943.0" y1="686.5" y2="686.5"/><line x1="493.0" x2="943.0" y1="728.0" y2="728.0"/><line x1="493.0" x2="943.0" y1="769.4" y2="769.4"/><line x1="493.0" x2="493.0" y1="603.7" y2="769.4"/><line x1="529.5" x2="529.5" y1="603.7" y2="769.4"/><line x1="566.0" x2="566.0" y1="603.7" y2="769.4"/><line x1="602.5" x2="602.5" y1="603.7" y2="769.4"/><line x1="638.9" x2="638.9" y1="603.7" y2="769.4"/><line x1="675.4" x2="675.4" y1="603.7" y2="769.4"/><line x1="711.9" x2="711.9" y1="603.7" y2="769.4"/><line x1="748.4" x2="748.4" y1="603.7" y2="769.4"/><line x1="784.9" x2="784.9" y1="603.7" y2="769.4"/><line x1="821.4" x2="821.4" y1="603.7" y2="769.4"/><line x1="857.9" x2="857.9" y1="603.7" y2="769.4"/><line x1="894.4" x2="894.4" y1="603.7" y2="769.4"/><line x1="943.0" x2="943.0" y1="603.7" y2="769.4"/></g><g fill="#9ca3af" font-size="10" class="ax"><text x="485.08" y="611.1" text-anchor="end" letter-spacing="0.08">60.0 Gbps</text><text x="485.08" y="648.7" text-anchor="end" letter-spacing="0.08">45.0 Gbps</text><text x="485.08" y="690.1" text-anchor="end" letter-spacing="0.08">30.0 Gbps</text><text x="485.08" y="731.6" text-anchor="end" letter-spacing="0.08">15.0 Gbps</text><text x="485.25" y="773.0" text-anchor="end" letter-spacing="0.25">0 bps</text><text x="493.2" y="784.6" text-anchor="middle" letter-spacing="0.45">08:05</text><text x="529.7" y="784.6" text-anchor="middle" letter-spacing="0.45">08:20</text><text x="566.2" y="784.6" text-anchor="middle" letter-spacing="0.45">08:35</text><text x="602.7" y="784.6" text-anchor="middle" letter-spacing="0.45">08:50</text><text x="639.1" y="784.6" text-anchor="middle" letter-spacing="0.45">09:05</text><text x="675.6" y="784.6" text-anchor="middle" letter-spacing="0.45">09:20</text><text x="712.1" y="784.6" text-anchor="middle" letter-spacing="0.45">12:25</text><text x="748.6" y="784.6" text-anchor="middle" letter-spacing="0.45">12:40</text><text x="785.1" y="784.6" text-anchor="middle" letter-spacing="0.45">12:55</text><text x="821.6" y="784.6" text-anchor="middle" letter-spacing="0.45">13:10</text><text x="858.1" y="784.6" text-anchor="middle" letter-spacing="0.45">13:25</text><text x="894.6" y="784.6" text-anchor="middle" letter-spacing="0.45">13:40</text><text x="939.2" y="784.6" text-anchor="middle" letter-spacing="0.45">14:00</text></g><path d="M493.00,713.80C497.05,730.55,501.11,747.30,505.16,747.30C509.22,747.30,513.27,742.45,517.32,739.60C521.38,736.75,525.43,730.20,529.49,730.20C533.54,730.20,537.59,756.00,541.65,756.00C545.70,756.00,549.76,738.02,553.81,729.90C557.86,721.78,561.92,712.67,565.97,707.30C570.03,701.93,574.08,697.70,578.14,697.70C582.19,697.70,586.24,717.70,590.30,728.30C594.35,738.90,598.41,761.30,602.46,761.30C606.51,761.30,610.57,736.92,614.62,721.80C618.68,706.68,622.73,670.60,626.78,670.60C630.84,670.60,634.89,706.02,638.95,721.80C643.00,737.58,647.05,765.30,651.11,765.30C655.16,765.30,659.22,666.70,663.27,666.70C667.32,666.70,671.38,696.48,675.43,708.90C679.49,721.32,683.54,741.20,687.59,741.20C691.65,741.20,695.70,736.37,699.76,726.70C703.81,717.03,707.86,655.33,711.92,652.60C715.97,649.87,720.03,648.50,724.08,648.50C728.14,648.50,732.19,691.20,736.24,692.00C740.30,692.80,744.35,692.40,748.41,693.20C752.46,694.00,756.51,721.63,760.57,729.90C764.62,738.17,768.68,742.80,772.73,742.80C776.78,742.80,780.84,739.60,784.89,739.60C788.95,739.60,793.00,747.57,797.05,752.40C801.11,757.23,805.16,768.60,809.22,768.60C813.27,768.60,817.32,768.30,821.38,768.30C825.43,768.30,829.49,768.60,833.54,768.60C837.59,768.60,841.65,768.05,845.70,767.70C849.76,767.35,853.81,766.50,857.86,766.50C861.92,766.50,865.97,767.40,870.03,767.40C874.08,767.40,878.14,767.10,882.19,766.80C886.24,766.50,890.30,766.18,894.35,765.60C898.41,765.02,902.46,763.30,906.51,763.30C910.57,763.30,914.62,766.67,918.68,766.80C922.73,766.93,926.78,767.00,930.84,767.00C934.89,767.00,938.95,765.60,943.00,764.20L943.00,769.40L493.00,769.40Z" fill="url(#rxg2)" stroke="none"/><path d="M493.00,723.10C497.05,737.15,501.11,751.20,505.16,751.20C509.22,751.20,513.27,738.42,517.32,731.50C521.38,724.58,525.43,709.70,529.49,709.70C533.54,709.70,537.59,761.30,541.65,761.30C545.70,761.30,549.76,717.00,553.81,717.00C557.86,717.00,561.92,730.70,565.97,730.70C570.03,730.70,574.08,715.10,578.14,715.10C582.19,715.10,586.24,719.40,590.30,726.70C594.35,734.00,598.41,758.90,602.46,758.90C606.51,758.90,610.57,755.67,614.62,749.20C618.68,742.73,622.73,694.40,626.78,694.40C630.84,694.40,634.89,760.50,638.95,760.50C643.00,760.50,647.05,757.80,651.11,752.40C655.16,747.00,659.22,724.20,663.27,724.20C667.32,724.20,671.38,742.50,675.43,742.50C679.49,742.50,683.54,736.00,687.59,736.00C691.65,736.00,695.70,754.90,699.76,754.90C703.81,754.90,707.86,735.57,711.92,726.70C715.97,717.83,720.03,701.70,724.08,701.70C728.14,701.70,732.19,725.10,736.24,725.10C740.30,725.10,744.35,692.00,748.41,692.00C752.46,692.00,756.51,730.70,760.57,730.70C764.62,730.70,768.68,726.70,772.73,726.70C776.78,726.70,780.84,752.40,784.89,752.40C788.95,752.40,793.00,623.50,797.05,623.50C801.11,623.50,805.16,768.60,809.22,768.60C813.27,768.60,817.32,768.60,821.38,768.60C825.43,768.60,829.49,769.00,833.54,769.00C837.59,769.00,841.65,768.48,845.70,768.30C849.76,768.12,853.81,767.90,857.86,767.90C861.92,767.90,865.97,768.10,870.03,768.10C874.08,768.10,878.14,768.03,882.19,767.90C886.24,767.77,890.30,767.47,894.35,767.00C898.41,766.53,902.46,765.10,906.51,765.10C910.57,765.10,914.62,765.10,918.68,765.10C922.73,765.10,926.78,766.67,930.84,767.40C934.89,768.13,938.95,768.82,943.00,769.50L943.00,769.40L493.00,769.40Z" fill="url(#txg2)" stroke="none"/><path d="M493.00,713.80C497.05,730.55,501.11,747.30,505.16,747.30C509.22,747.30,513.27,742.45,517.32,739.60C521.38,736.75,525.43,730.20,529.49,730.20C533.54,730.20,537.59,756.00,541.65,756.00C545.70,756.00,549.76,738.02,553.81,729.90C557.86,721.78,561.92,712.67,565.97,707.30C570.03,701.93,574.08,697.70,578.14,697.70C582.19,697.70,586.24,717.70,590.30,728.30C594.35,738.90,598.41,761.30,602.46,761.30C606.51,761.30,610.57,736.92,614.62,721.80C618.68,706.68,622.73,670.60,626.78,670.60C630.84,670.60,634.89,706.02,638.95,721.80C643.00,737.58,647.05,765.30,651.11,765.30C655.16,765.30,659.22,666.70,663.27,666.70C667.32,666.70,671.38,696.48,675.43,708.90C679.49,721.32,683.54,741.20,687.59,741.20C691.65,741.20,695.70,736.37,699.76,726.70C703.81,717.03,707.86,655.33,711.92,652.60C715.97,649.87,720.03,648.50,724.08,648.50C728.14,648.50,732.19,691.20,736.24,692.00C740.30,692.80,744.35,692.40,748.41,693.20C752.46,694.00,756.51,721.63,760.57,729.90C764.62,738.17,768.68,742.80,772.73,742.80C776.78,742.80,780.84,739.60,784.89,739.60C788.95,739.60,793.00,747.57,797.05,752.40C801.11,757.23,805.16,768.60,809.22,768.60C813.27,768.60,817.32,768.30,821.38,768.30C825.43,768.30,829.49,768.60,833.54,768.60C837.59,768.60,841.65,768.05,845.70,767.70C849.76,767.35,853.81,766.50,857.86,766.50C861.92,766.50,865.97,767.40,870.03,767.40C874.08,767.40,878.14,767.10,882.19,766.80C886.24,766.50,890.30,766.18,894.35,765.60C898.41,765.02,902.46,763.30,906.51,763.30C910.57,763.30,914.62,766.67,918.68,766.80C922.73,766.93,926.78,767.00,930.84,767.00C934.89,767.00,938.95,765.60,943.00,764.20" fill="none" stroke="#38bdf8" stroke-width="1.5"/><path d="M493.00,723.10C497.05,737.15,501.11,751.20,505.16,751.20C509.22,751.20,513.27,738.42,517.32,731.50C521.38,724.58,525.43,709.70,529.49,709.70C533.54,709.70,537.59,761.30,541.65,761.30C545.70,761.30,549.76,717.00,553.81,717.00C557.86,717.00,561.92,730.70,565.97,730.70C570.03,730.70,574.08,715.10,578.14,715.10C582.19,715.10,586.24,719.40,590.30,726.70C594.35,734.00,598.41,758.90,602.46,758.90C606.51,758.90,610.57,755.67,614.62,749.20C618.68,742.73,622.73,694.40,626.78,694.40C630.84,694.40,634.89,760.50,638.95,760.50C643.00,760.50,647.05,757.80,651.11,752.40C655.16,747.00,659.22,724.20,663.27,724.20C667.32,724.20,671.38,742.50,675.43,742.50C679.49,742.50,683.54,736.00,687.59,736.00C691.65,736.00,695.70,754.90,699.76,754.90C703.81,754.90,707.86,735.57,711.92,726.70C715.97,717.83,720.03,701.70,724.08,701.70C728.14,701.70,732.19,725.10,736.24,725.10C740.30,725.10,744.35,692.00,748.41,692.00C752.46,692.00,756.51,730.70,760.57,730.70C764.62,730.70,768.68,726.70,772.73,726.70C776.78,726.70,780.84,752.40,784.89,752.40C788.95,752.40,793.00,623.50,797.05,623.50C801.11,623.50,805.16,768.60,809.22,768.60C813.27,768.60,817.32,768.60,821.38,768.60C825.43,768.60,829.49,769.00,833.54,769.00C837.59,769.00,841.65,768.48,845.70,768.30C849.76,768.12,853.81,767.90,857.86,767.90C861.92,767.90,865.97,768.10,870.03,768.10C874.08,768.10,878.14,768.03,882.19,767.90C886.24,767.77,890.30,767.47,894.35,767.00C898.41,766.53,902.46,765.10,906.51,765.10C910.57,765.10,914.62,765.10,918.68,765.10C922.73,765.10,926.78,766.67,930.84,767.40C934.89,768.13,938.95,768.82,943.00,769.50" fill="none" stroke="#4ade80" stroke-width="1.5"/><g stroke="#3a4659" stroke-opacity="1" stroke-dasharray="3 3" stroke-width="1"><line x1="493.0" x2="943.0" y1="893.5" y2="893.5"/><line x1="492.8" x2="492.8" y1="893.5" y2="900"/><line x1="528.6" x2="528.6" y1="893.5" y2="900"/><line x1="564.4" x2="564.4" y1="893.5" y2="900"/><line x1="611.5" x2="611.5" y1="893.5" y2="900"/><line x1="647.3" x2="647.3" y1="893.5" y2="900"/><line x1="695.1" x2="695.1" y1="893.5" y2="900"/><line x1="730.1" x2="730.1" y1="893.5" y2="900"/><line x1="765.1" x2="765.1" y1="893.5" y2="900"/><line x1="812.6" x2="812.6" y1="893.5" y2="900"/><line x1="848.3" x2="848.3" y1="893.5" y2="900"/><line x1="883.7" x2="883.7" y1="893.5" y2="900"/><line x1="942.9" x2="942.9" y1="893.5" y2="900"/></g><text x="485" y="901" text-anchor="end" fill="#9ca3af" font-size="10">60.0 Gbps</text></svg>
</body></html>
